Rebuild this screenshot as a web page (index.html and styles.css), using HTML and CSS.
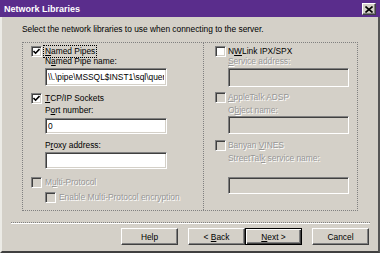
FILE: index.html
```html
<!DOCTYPE html>
<html lang="en">
<head>
    <meta charset="UTF-8">
    <title>Network Libraries</title>
    <link rel="stylesheet" href="styles.css">
</head>
<body>

<div class="window">
    <div class="titlebar">
        <span>Network Libraries</span>
        <div class="close">
            <svg width="8" height="7" viewBox="0 0 8 7"><path d="M0.5 0.5 L7.5 6.5 M7.5 0.5 L0.5 6.5" stroke="#000" stroke-width="1.6"/></svg>
        </div>
    </div>

    <div class="content">
        <p class="intro">Select the network libraries to use when connecting to the server.</p>

        <div class="group">
            <!-- Left column -->
            <div class="col col-left">
                <div class="row r-np">
                    <span class="cb"><svg width="7" height="7" viewBox="0 0 7 7"><path d="M0.5 3 L2.6 5.2 L6.5 1" stroke="#000" stroke-width="1.6" fill="none"/></svg></span>
                    <span class="focus"><u>N</u>amed Pipes</span>
                </div>
                <div class="label l-np">N<u>a</u>med Pipe name:</div>
                <input class="field f-np" type="text" value="\\.\pipe\MSSQL$INST1\sql\query">

                <div class="row r-tcp">
                    <span class="cb"><svg width="7" height="7" viewBox="0 0 7 7"><path d="M0.5 3 L2.6 5.2 L6.5 1" stroke="#000" stroke-width="1.6" fill="none"/></svg></span>
                    <span><u>T</u>CP/IP Sockets</span>
                </div>
                <div class="label l-port">P<u>o</u>rt number:</div>
                <input class="field f-port" type="text" value="0">
                <div class="label l-proxy">P<u>r</u>oxy address:</div>
                <input class="field f-proxy" type="text" value="">

                <div class="row r-multi disabled">
                    <span class="cb off"></span>
                    <span>M<u>u</u>lti-Protocol</span>
                </div>
                <div class="row r-enc disabled">
                    <span class="cb off"></span>
                    <span>Enable Multi-Protocol encryption</span>
                </div>
            </div>

            <!-- Right column -->
            <div class="col col-right">
                <div class="row r-nw">
                    <span class="cb"></span>
                    <span>N<u>W</u>Link IPX/SPX</span>
                </div>
                <div class="label l-svc disabled"><u>S</u>ervice address:</div>
                <div class="field off f-svc"></div>

                <div class="row r-apple disabled">
                    <span class="cb off"></span>
                    <span><u>A</u>ppleTalk ADSP</span>
                </div>
                <div class="label l-obj disabled">O<u>b</u>ject name:</div>
                <div class="field off f-obj"></div>

                <div class="row r-banyan disabled">
                    <span class="cb off"></span>
                    <span>Banyan <u>V</u>INES</span>
                </div>
                <div class="label l-st disabled">StreetTal<u>k</u> service name:</div>
                <div class="field off f-st"></div>
            </div>
        </div>

        <div class="sep"></div>

        <div class="buttons">
            <button class="btn">Help</button>
            <button class="btn btn-back">&lt; <u>B</u>ack</button>
            <button class="btn btn-default"><u>N</u>ext &gt;</button>
            <button class="btn btn-cancel">Cancel</button>
        </div>
    </div>
</div>

</body>
</html>
```

FILE: styles.css
```css
body {
    margin: 0;
    font-family: "Liberation Sans", Arial, sans-serif;
    font-size: 8.4px;
    color: #000;
    background-color: #d4d0c8;
}

.window {
    width: 380px;
    height: 253px;
    display: flex;
    flex-direction: column;
    background-color: #d4d0c8;
    overflow: hidden;
}

.titlebar {
    height: 17px;
    flex-shrink: 0;
    background-color: #5a2d8c;
    color: #fff;
    font-weight: bold;
    font-size: 9px;
    display: flex;
    align-items: center;
    justify-content: space-between;
    padding: 0 4px;
    box-sizing: border-box;
}

.close {
    width: 14px;
    height: 12px;
    margin-top: 1px;
    box-sizing: border-box;
    background-color: #d4d0c8;
    border: 1px solid;
    border-color: #fff #404040 #404040 #fff;
    box-shadow: inset -1px -1px #808080;
    display: flex;
    align-items: center;
    justify-content: center;
}

.content {
    flex: 1;
    border-left: 2px solid #ecebe6;
    border-right: 2px solid #555;
    border-bottom: 2px solid #404040;
}

.intro {
    margin: 6px 0 0 20px;
    line-height: 12px;
    height: 12px;
}

.group {
    margin: 7px 0 0 20px;
    width: 336px;
    height: 169px;
    box-sizing: border-box;
    border: 1px dotted #808080;
    display: flex;
}

.col {
    display: flex;
    flex-direction: column;
    align-items: flex-start;
}

.col-left {
    width: 180px;
    padding-left: 8px;
    box-sizing: border-box;
}

.col-right {
    flex: 1;
    border-left: 1px dotted #808080;
    padding-left: 11px;
}

.row {
    display: flex;
    align-items: center;
    height: 13px;
    line-height: 13px;
    white-space: nowrap;
}

.label {
    height: 13px;
    line-height: 13px;
    white-space: nowrap;
}

.col-left .label, .col-left .field, .r-enc {
    margin-left: 14px;
}

.col-right .label, .col-right .field {
    margin-left: 13px;
}

.cb {
    width: 11px;
    height: 11px;
    flex-shrink: 0;
    box-sizing: border-box;
    background-color: #fff;
    border: 1px solid;
    border-color: #808080 #fff #fff #808080;
    box-shadow: inset 1px 1px #404040, inset -1px -1px #d4d0c8;
    display: flex;
    align-items: center;
    justify-content: center;
    margin-right: 3px;
}

.col-right .cb {
    margin-right: 2px;
}

.cb.off {
    background-color: #d4d0c8;
}

.focus {
    outline: 1px dotted #000;
    padding: 0 1px;
    margin-left: -1px;
    line-height: 11px;
}

.disabled {
    color: #979797;
    text-shadow: 1px 1px 0 #fff;
}

.field {
    display: block;
    width: 122px;
    box-sizing: border-box;
    margin: 0;
    padding: 0 2px;
    font-family: "Liberation Sans", Arial, sans-serif;
    font-size: 8.4px;
    color: #000;
    background-color: #fff;
    border: 1px solid;
    border-color: #808080 #fff #fff #808080;
    box-shadow: inset 1px 1px #404040, inset -1px -1px #d4d0c8;
    outline: none;
}

.field.off {
    width: 121px;
    background-color: #d4d0c8;
}

/* vertical rhythm, left column */
.r-np { margin-top: 2px; }
.l-np { margin-top: -3px; }
.f-np { height: 18px; }
.r-tcp { margin-top: 6px; }
.l-port { margin-top: -1px; }
.f-port { margin-top: 1px; height: 16px; }
.l-proxy { margin-top: 5px; }
.f-proxy { height: 17px; }
.r-multi { margin-top: 7px; }
.r-enc { margin-top: 2px; }

/* vertical rhythm, right column */
.r-nw { margin-top: 2px; }
.l-svc { margin-top: -3px; }
.f-svc { height: 19px; }
.r-apple { margin-top: 4px; }
.f-obj { margin-top: -1px; height: 18px; }
.r-banyan { margin-top: 5px; }
.f-st { margin-top: 12px; height: 17px; }

.sep {
    margin: 11px 0 0 9px;
    width: 359px;
    border-top: 1px dotted #808080;
    border-bottom: 1px solid #fff;
}

.buttons {
    display: flex;
    margin-top: 4px;
    padding-left: 119px;
}

.btn {
    width: 57px;
    height: 17px;
    padding: 0;
    font-family: "Liberation Sans", Arial, sans-serif;
    font-size: 8.4px;
    color: #000;
    background-color: #d4d0c8;
    border: 1px solid;
    border-color: #fff #404040 #404040 #fff;
    box-shadow: inset -1px -1px #808080;
}

.btn-back {
    margin-left: 10px;
}

.btn-default {
    border-color: #000;
    box-shadow: inset 1px 1px #fff, inset -1px -1px #404040, inset -2px -2px #808080;
}

.btn-cancel {
    margin-left: 10px;
}
```
